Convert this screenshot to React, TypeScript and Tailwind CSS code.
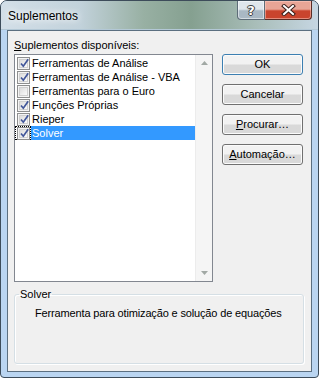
import React from 'react';

const addins = [
  { name: 'Ferramentas de Análise', checked: true },
  { name: 'Ferramentas de Análise - VBA', checked: true },
  { name: 'Ferramentas para o Euro', checked: false },
  { name: 'Funções Próprias', checked: true },
  { name: 'Rieper', checked: true },
  { name: 'Solver', checked: true, selected: true },
];

function CheckBox({ checked }: { checked: boolean }) {
  return (
    <div className="w-[13px] h-[13px] border border-[#8e8f8f] bg-[#f4f4f4] p-[1px]">
      <div className="relative w-full h-full border border-[#d0d0d0] bg-linear-to-br from-[#dcdcdc] to-[#fbfbfb]">
        {checked && (
          <svg className="absolute -left-[1px] -top-[2px]" width="11" height="11" viewBox="0 0 11 11">
            <path d="M2 5.5 L4.3 8.2 L9.2 1.2" fill="none" stroke="#42579a" strokeWidth="1.7" />
          </svg>
        )}
      </div>
    </div>
  );
}

function DialogButton({ children, isDefault }: { children: React.ReactNode; isDefault?: boolean }) {
  return (
    <button
      className={
        'w-[81px] h-[21px] rounded-[3px] border text-[11px] leading-[13px] text-black bg-linear-to-b from-[#f2f2f2] from-45% to-[#d9d9d9] to-55% shadow-[inset_0_0_0_1px_#fbfbfb] ' +
        (isDefault ? 'border-[#3c7fb1] shadow-[inset_0_0_0_1px_#48d7fb]' : 'border-[#707070]')
      }
    >
      {children}
    </button>
  );
}

export default function App() {
  return (
    <div className="w-[319px] h-[378px] font-['Liberation_Sans',Arial,sans-serif] text-black">
      <div className="w-full h-full flex flex-col border border-[#3d4c5a] rounded-t-[7px] rounded-b-[4px] bg-[#bad5f1] overflow-hidden">
        {/* title bar */}
        <div className="h-[28px] flex justify-between bg-[linear-gradient(90deg,#d3dfe8_0%,#c2d2db_25%,#98b0a3_45%,#85a090_60%,#a8bdb8_80%,#c6d6e2_100%)]">
          <div className="pl-[7px] pt-[8px] text-[12px] leading-[14px] [text-shadow:0_0_6px_#fff,0_0_10px_#fff]">Suplementos</div>
          <div className="flex mr-[6px] h-[19px]">
            <div className="w-[28px] h-[19px] flex items-center justify-center border border-t-0 border-[#5d6c78] rounded-bl-[4px] bg-linear-to-b from-[#dfe6ec] from-45% to-[#a9b8c4] to-55% shadow-[inset_0_0_0_1px_rgba(255,255,255,0.5)]">
              <span className="font-['DejaVu_Sans',sans-serif] font-bold text-[13px] leading-[13px] text-white [text-shadow:0_0_1px_#333,1px_0_0_#444,-1px_0_0_#444,0_1px_0_#444,0_-1px_0_#444]">?</span>
            </div>
            <div className="w-[47px] h-[19px] flex items-center justify-center border border-l-0 border-t-0 border-[#5a2d26] rounded-br-[4px] bg-linear-to-b from-[#e8a596] from-45% to-[#c9442d] to-55% shadow-[inset_0_0_0_1px_rgba(255,210,200,0.5)]">
              <svg width="15" height="12" viewBox="0 0 15 12">
                <path d="M3 2 L12 10 M12 2 L3 10" stroke="#3a1f1a" strokeWidth="4" strokeLinecap="square" />
                <path d="M3 2 L12 10 M12 2 L3 10" stroke="#ffffff" strokeWidth="2" strokeLinecap="square" />
              </svg>
            </div>
          </div>
        </div>
        <div className="h-[1px] bg-[#b3c8d6]" />

        {/* client area */}
        <div className="mx-[6px] h-[342px] border border-[#5b6f80] bg-[#f0f0f0] px-[6px]">
          <div className="flex">
            <div>
              <div className="h-[23px] pt-[8px] text-[11px] leading-[13px]">
                <span className="underline">S</span>uplementos disponíveis:
              </div>
              <div className="w-[199px] h-[228px] border border-[#828790] bg-white flex">
                <div className="flex-1 pt-[1px]">
                  {addins.map((a) => (
                    <div key={a.name} className="h-[14px] flex text-[11px] leading-[14px]">
                      <div
                        className={
                          'w-[16px] h-[14px] flex items-center justify-center ' +
                          (a.selected ? 'border border-dotted border-black' : '')
                        }
                      >
                        <CheckBox checked={a.checked} />
                      </div>
                      <div className={'flex-1 pl-[1px] ' + (a.selected ? 'bg-[#3399ff] text-white' : '')}>{a.name}</div>
                    </div>
                  ))}
                </div>
                <div className="w-[17px] h-full flex flex-col justify-between items-center bg-[#f5f5f5] border-l border-[#ececec] py-[6px]">
                  <svg width="7" height="4" viewBox="0 0 7 4">
                    <path d="M0 4 L3.5 0 L7 4 Z" fill="#a2a9a5" />
                  </svg>
                  <svg width="7" height="4" viewBox="0 0 7 4">
                    <path d="M0 0 L3.5 4 L7 0 Z" fill="#a2a9a5" />
                  </svg>
                </div>
              </div>
            </div>
            <div className="ml-[9px] mt-[23px] flex flex-col gap-[9px]">
              <DialogButton isDefault>OK</DialogButton>
              <DialogButton>Cancelar</DialogButton>
              <DialogButton>
                <span className="underline">P</span>rocurar…
              </DialogButton>
              <DialogButton>
                <span className="underline">A</span>utomação…
              </DialogButton>
            </div>
          </div>

          <fieldset className="mt-[6px] w-[290px] h-[76px] border border-[#d5dfe5] rounded-[3px] shadow-[inset_1px_1px_0_#fff,1px_1px_0_#fff] pl-[20px] pr-[2px]">
            <legend className="ml-[-16px] px-[1px] text-[11px] leading-[13px]">Solver</legend>
            <div className="pt-[6px] text-[11px] leading-[13px] whitespace-nowrap tracking-[-0.15px]">Ferramenta para otimização e solução de equações</div>
          </fieldset>
        </div>
      </div>
    </div>
  );
}
